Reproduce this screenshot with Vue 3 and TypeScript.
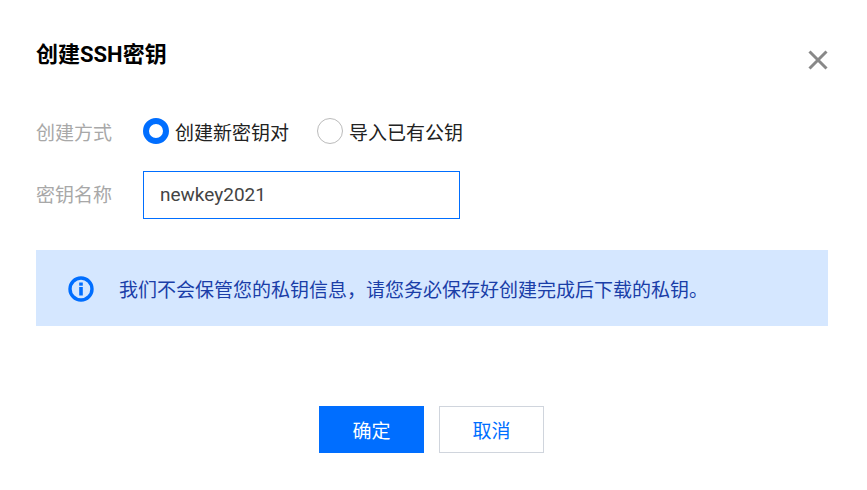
<template>
  <div class="dialog">
    <div class="head">
      <h3 class="title">创建SSH密钥</h3>
      <button class="close" type="button" aria-label="关闭">
        <svg width="20" height="20" viewBox="0 0 20 20">
          <path d="M1.5 1.5L18.5 18.5M18.5 1.5L1.5 18.5" stroke="#888" stroke-width="3" fill="none" />
        </svg>
      </button>
    </div>

    <div class="form">
      <div class="row row-radio">
        <span class="label">创建方式</span>
        <div class="radios">
          <label v-for="item in modes" :key="item.value" class="radio" @click="mode = item.value">
            <i class="dot" :class="{ on: mode === item.value }"></i>
            <span>{{ item.text }}</span>
          </label>
        </div>
      </div>
      <div class="row row-input">
        <span class="label">密钥名称</span>
        <input v-model="keyName" class="input" type="text" />
      </div>
    </div>

    <div class="notice">
      <svg class="notice-icon" width="26" height="26" viewBox="0 0 26 26">
        <circle cx="13" cy="13" r="11" fill="none" stroke="#006eff" stroke-width="3.4" />
        <rect x="11.2" y="6.5" width="3.6" height="3.2" fill="#006eff" />
        <rect x="11.2" y="11" width="3.6" height="8.5" fill="#006eff" />
      </svg>
      <p class="notice-text">我们不会保管您的私钥信息，请您务必保存好创建完成后下载的私钥。</p>
    </div>

    <div class="foot">
      <button class="btn primary" type="button">确定</button>
      <button class="btn" type="button">取消</button>
    </div>
  </div>
</template>

<script setup lang="ts">
import { ref } from 'vue'

const modes = [
  { value: 'new', text: '创建新密钥对' },
  { value: 'import', text: '导入已有公钥' }
]

const mode = ref('new')
const keyName = ref('newkey2021')
</script>

<style scoped>
.dialog {
  width: 867px;
  height: 490px;
  box-sizing: border-box;
  padding: 41px 39px 0 36px;
  background: #fff;
  font-family: Roboto, "Noto Sans CJK SC", sans-serif;
  font-size: 19px;
  color: #222;
  overflow: hidden;
}

.head {
  display: flex;
  justify-content: space-between;
  height: 53px;
}

.title {
  margin: 0;
  font-size: 22px;
  line-height: 27px;
  font-weight: 700;
  color: #000;
}

.close {
  width: 20px;
  height: 20px;
  margin: 9px 0 0 0;
  padding: 0;
  border: 0;
  background: none;
  cursor: pointer;
}

.form {
  display: flex;
  flex-direction: column;
  gap: 24px;
  margin-top: 21px;
}

.row {
  display: flex;
  align-items: center;
}

.row-radio {
  height: 32px;
}

.row-input {
  height: 48px;
}

.row-input .label {
  margin-bottom: 4px;
}

.label {
  width: 107px;
  flex: none;
  color: #a8a8a8;
}

.radios {
  display: flex;
  gap: 28px;
}

.radio {
  display: flex;
  align-items: center;
  gap: 6px;
  cursor: pointer;
}

.dot {
  width: 26px;
  height: 26px;
  box-sizing: border-box;
  border: 1px solid #bbb;
  border-radius: 50%;
  background: #fff;
}

.dot.on {
  border: 6px solid #006eff;
}

.input {
  width: 317px;
  height: 48px;
  box-sizing: border-box;
  padding: 0 16px 2px;
  border: 1px solid #006eff;
  border-radius: 0;
  outline: none;
  font: inherit;
  color: #444;
}

.notice {
  display: flex;
  align-items: center;
  gap: 25px;
  height: 76px;
  margin-top: 31px;
  padding-left: 32px;
  background: #d5e7ff;
}

.notice-icon {
  flex: none;
  margin-top: 1px;
}

.notice-text {
  margin: 0;
  color: #1a3ea8;
}

.foot {
  display: flex;
  justify-content: center;
  gap: 15px;
  margin-top: 80px;
  padding-right: 1px;
}

.btn {
  width: 105px;
  height: 47px;
  box-sizing: border-box;
  border: 1px solid #d0d5dd;
  background: #fff;
  font: inherit;
  color: #006eff;
  cursor: pointer;
}

.btn.primary {
  border-color: #006eff;
  background: #006eff;
  color: #fff;
}
</style>
